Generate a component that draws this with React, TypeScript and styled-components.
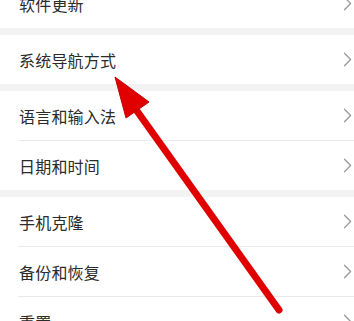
import styled, { createGlobalStyle } from "styled-components";

const GlobalStyle = createGlobalStyle`
  html, body {
    margin: 0;
    padding: 0;
    background: #f3f3f3;
  }
  body {
    font-family: "Noto Sans CJK SC", "Noto Sans", sans-serif;
    overflow: hidden;
  }
`;

const groups: string[][] = [
  ["软件更新"],
  ["系统导航方式"],
  ["语言和输入法", "日期和时间"],
  ["手机克隆", "备份和恢复", "重置"],
];

const Chevron = () => (
  <svg width="9" height="15" viewBox="0 0 9 15">
    <path
      d="M1.5 1.2 L7.6 7.5 L1.5 13.8"
      fill="none"
      stroke="#9a9a9a"
      strokeWidth="1.3"
      strokeLinecap="round"
      strokeLinejoin="round"
    />
  </svg>
);

const Arrow = () => (
  <ArrowLayer viewBox="0 0 354 321">
    <line
      x1="132"
      y1="104"
      x2="279"
      y2="310"
      stroke="#e10000"
      strokeWidth="7"
      strokeLinecap="round"
    />
    <polygon
      points="115,77 149,102 126,118"
      fill="#e10000"
      stroke="#c40000"
      strokeWidth="1"
      strokeLinejoin="round"
    />
  </ArrowLayer>
);

const App = () => {
  return (
    <Screen>
      <GlobalStyle />
      <List>
        {groups.map((items, gi) => (
          <Group key={gi}>
            {items.map((label, i) => (
              <div key={label}>
                {i > 0 && <Divider />}
                <Row>
                  <Label>{label}</Label>
                  <Chevron />
                </Row>
              </div>
            ))}
          </Group>
        ))}
      </List>
      <Arrow />
    </Screen>
  );
};

const Screen = styled.div`
  position: relative;
  width: 354px;
  height: 321px;
  overflow: hidden;
  background: #f3f3f3;
`;

const List = styled.div`
  display: flex;
  flex-direction: column;
  gap: 7px;
  margin-top: -21px;
`;

const Group = styled.div`
  background: #ffffff;
`;

const Row = styled.div`
  height: 49px;
  display: flex;
  align-items: center;
  justify-content: space-between;
  padding: 0 2px 0 19px;
`;

const Label = styled.span`
  font-size: 16px;
  color: #2b2b2b;
  letter-spacing: 0.2px;
`;

const Divider = styled.div`
  height: 1px;
  margin-left: 18px;
  background: #e9e9e9;
`;

const ArrowLayer = styled.svg`
  position: absolute;
  left: 0;
  top: 0;
  width: 354px;
  height: 321px;
  pointer-events: none;
`;

export default App;
